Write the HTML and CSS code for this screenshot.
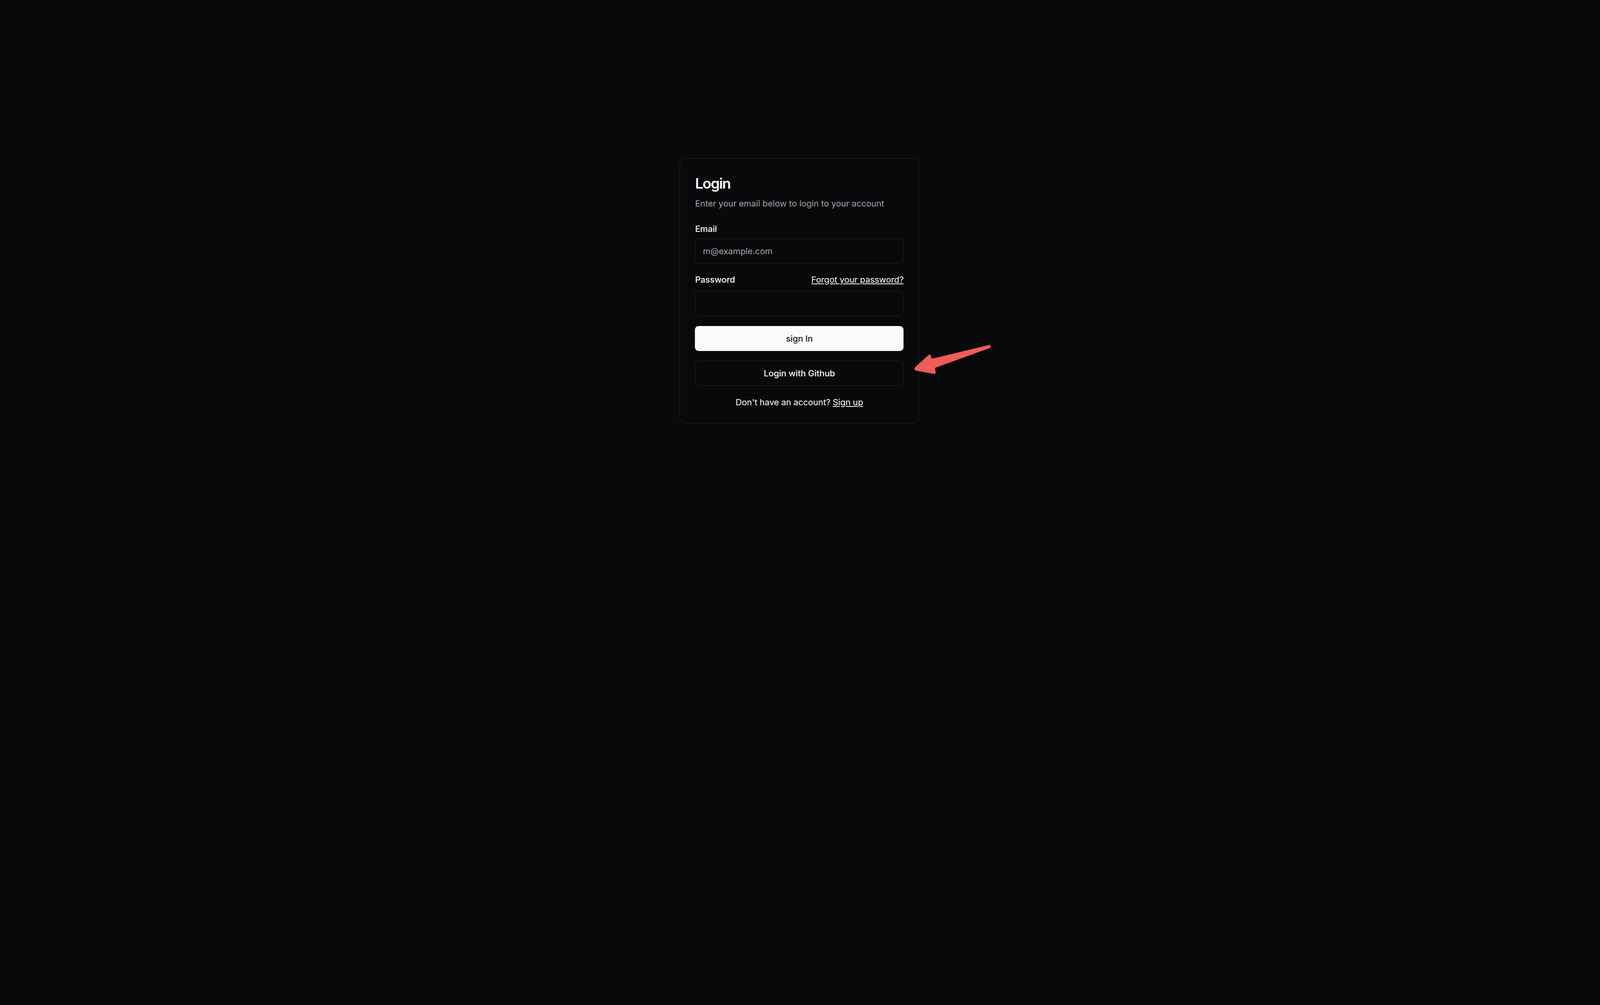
FILE: index.html
```html
<!DOCTYPE html>
<html lang="en">
<head>
<meta charset="utf-8">
<title>Login</title>
<link rel="stylesheet" href="styles.css">
</head>
<body>
<main class="page">
  <div class="card">
    <div class="card-header">
      <h1 class="card-title">Login</h1>
      <p class="card-desc">Enter your email below to login to your account</p>
    </div>
    <div class="card-content">
      <div class="form">
        <div class="field">
          <label class="label" for="email">Email</label>
          <input class="input" id="email" type="email" placeholder="m@example.com">
        </div>
        <div class="field">
          <div class="label-row">
            <label class="label" for="password">Password</label>
            <a class="link" href="#">Forgot your password?</a>
          </div>
          <input class="input" id="password" type="password">
        </div>
        <button class="btn btn-primary" type="button">sign In</button>
        <button class="btn btn-outline" type="button">Login with Github</button>
      </div>
      <p class="footer-text">Don't have an account? <a class="link-inline" href="#">Sign up</a></p>
    </div>
    <svg class="annotation" viewBox="2900 1090 280 120" aria-hidden="true">
      <path d="M 3164 1105 L 3167 1114 L 2988 1179 L 2990 1191 Q 2992 1199 2984 1198 L 2929 1188 Q 2918 1185 2925 1177 L 2966 1139 Q 2972 1133 2975 1140 L 2978 1150 Z" fill="#f05c57"/>
    </svg>
  </div>
</main>
</body>
</html>
```

FILE: styles.css
```css
* {
  box-sizing: border-box;
}

html, body {
  margin: 0;
  padding: 0;
  background: #09090b;
}

body {
  min-height: 100vh;
  font-family: Inter, "Liberation Sans", sans-serif;
  color: #fafafa;
}

.page {
  display: flex;
  justify-content: center;
  padding-top: 404.8px;
  padding-right: 3.2px;
}

.card {
  position: relative;
  width: 612.8px;
  border: 1.6px solid #27272a;
  border-radius: 14px;
  background: #09090b;
}

.card-header {
  display: flex;
  flex-direction: column;
  gap: 9.6px;
  padding: 38.4px 38.4px 38.4px 38.4px;
}

.card-title {
  margin: 0;
  font-size: 37px;
  line-height: 51.2px;
  font-weight: 600;
  letter-spacing: -1.7px;
}

.card-desc {
  margin: 0;
  font-size: 22px;
  line-height: 32px;
  letter-spacing: -0.1px;
  color: #a1a1aa;
}

.card-content {
  padding: 0 38.4px 38.4px 38.4px;
}

.form {
  display: flex;
  flex-direction: column;
  gap: 25.6px;
}

.field {
  display: flex;
  flex-direction: column;
  gap: 12.8px;
}

.label-row {
  display: flex;
  align-items: center;
  height: 32px;
}

.label {
  font-size: 22px;
  line-height: 22.4px;
  font-weight: 500;
  letter-spacing: -0.1px;
}

.link {
  margin-left: auto;
  font-size: 22px;
  line-height: 32px;
  letter-spacing: -0.1px;
  color: #fafafa;
  text-decoration: underline;
}

.input {
  display: block;
  width: 100%;
  height: 64px;
  padding: 0 19.2px;
  border: 1.6px solid #27272a;
  border-radius: 9.6px;
  background: transparent;
  font-family: inherit;
  font-size: 22px;
  letter-spacing: -0.1px;
  color: #fafafa;
  outline: none;
}

.input::placeholder {
  color: #a1a1aa;
}

.btn {
  display: flex;
  align-items: center;
  justify-content: center;
  width: 100%;
  height: 64px;
  padding: 0 25.6px;
  border-radius: 9.6px;
  font-family: inherit;
  font-size: 22px;
  font-weight: 500;
  letter-spacing: -0.1px;
  cursor: pointer;
}

.btn-primary {
  border: none;
  background: #fafafa;
  color: #18181b;
}

.btn-outline {
  border: 1.6px solid #27272a;
  background: #09090b;
  color: #fafafa;
}

.footer-text {
  margin: 25.6px 0 0 0;
  text-align: center;
  font-size: 22px;
  line-height: 32px;
  letter-spacing: -0.1px;
}

.link-inline {
  color: #fafafa;
  text-decoration: underline;
}

.annotation {
  position: absolute;
  left: 581.6px;
  top: 465.6px;
  width: 224px;
  height: 96px;
  overflow: visible;
}
```
